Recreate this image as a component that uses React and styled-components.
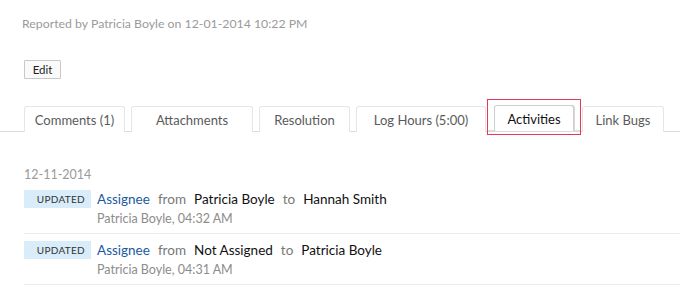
import React from 'react';
import styled, { createGlobalStyle } from 'styled-components';

const GlobalStyle = createGlobalStyle`
  body {
    margin: 0;
    background: #fff;
    font-family: "Lato", "Open Sans", sans-serif;
  }
`;

const Page = styled.div`
  width: 680px;
  height: 308px;
  overflow: hidden;
`;

const Reported = styled.div`
  padding: 16px 0 0 22px;
  font-size: 12.3px;
  line-height: 16px;
  color: #9a9a9a;
`;

const EditButton = styled.button`
  display: block;
  margin: 28px 0 0 24px;
  height: 19px;
  width: 37px;
  padding: 0;
  font-family: inherit;
  font-size: 11.5px;
  color: #222;
  background: #fafafa;
  border: 1px solid #c8c8c8;
  border-radius: 1px;
`;

const TabBar = styled.div`
  display: flex;
  align-items: flex-end;
  margin-top: 20px;
  padding-left: 24px;
  height: 32px;
  border-bottom: 1px solid #dcdcdc;
`;

const Tab = styled.div`
  box-sizing: border-box;
  width: ${({ w }) => w}px;
  height: 26px;
  margin-right: 6px;
  margin-bottom: -1px;
  display: flex;
  align-items: center;
  justify-content: center;
  font-size: 13px;
  color: ${({ active }) => (active ? '#111' : '#5a5a5a')};
  background: #fff;
  border: 1px solid ${({ active }) => (active ? '#cfcfcf' : '#e6e6e6')};
  border-bottom: none;
  border-radius: 3px 3px 0 0;
  box-shadow: ${({ active }) => (active ? '1px 0 0 #d8d8d8' : 'none')};
`;

const Highlight = styled.div`
  box-sizing: border-box;
  display: flex;
  align-items: flex-end;
  height: 36px;
  margin: 0 1px -4px -5px;
  padding: 0 6px 3px 6px;
  border: 1.5px solid #e8385a;
  background: linear-gradient(to bottom, transparent 30px, #dcdcdc 30px, #dcdcdc 31px, transparent 31px);

  & > ${Tab} {
    margin: 0;
  }
`;

const Feed = styled.div`
  padding: 35px 0 0 24px;
`;

const DateLabel = styled.div`
  font-size: 12.5px;
  line-height: 16px;
  color: #9a9a9a;
`;

const Entry = styled.div`
  display: flex;
  align-items: flex-start;
  gap: 6px;
  padding: 7px 0 6px;
  border-bottom: 1px solid #ececec;
`;

const Badge = styled.span`
  box-sizing: border-box;
  width: 67px;
  height: 18px;
  flex: none;
  display: flex;
  align-items: center;
  justify-content: flex-end;
  padding-right: 6px;
  background: #d8ecf9;
  font-size: 10px;
  letter-spacing: 0.3px;
  color: #333;
`;

const Body = styled.div`
  display: flex;
  flex-direction: column;
`;

const Line = styled.div`
  display: flex;
  gap: 8px;
  font-size: 13.5px;
  line-height: 18px;
`;

const Field = styled.span`
  color: #1b5aa0;
`;

const Word = styled.span`
  color: ${({ muted }) => (muted ? '#777' : '#111')};
`;

const Meta = styled.div`
  margin-top: 3px;
  font-size: 12.5px;
  line-height: 16px;
  color: #8c8c8c;
`;

const tabs = [
  { label: 'Comments (1)', w: 101 },
  { label: 'Attachments', w: 122 },
  { label: 'Resolution', w: 91 },
  { label: 'Log Hours (5:00)', w: 130 },
  { label: 'Activities', w: 80, active: true },
  { label: 'Link Bugs', w: 82 },
];

const entries = [
  { from: 'Patricia Boyle', to: 'Hannah Smith', by: 'Patricia Boyle, 04:32 AM' },
  { from: 'Not Assigned', to: 'Patricia Boyle', by: 'Patricia Boyle, 04:31 AM' },
];

const App = () => (
  <Page>
    <GlobalStyle />
    <Reported>Reported by Patricia Boyle on 12-01-2014 10:22 PM</Reported>
    <EditButton>Edit</EditButton>
    <TabBar>
      {tabs.map((t) =>
        t.active ? (
          <Highlight key={t.label}>
            <Tab w={t.w} active>
              {t.label}
            </Tab>
          </Highlight>
        ) : (
          <Tab key={t.label} w={t.w}>
            {t.label}
          </Tab>
        )
      )}
    </TabBar>
    <Feed>
      <DateLabel>12-11-2014</DateLabel>
      {entries.map((e, i) => (
        <Entry key={i}>
          <Badge>UPDATED</Badge>
          <Body>
            <Line>
              <Field>Assignee</Field>
              <Word muted>from</Word>
              <Word>{e.from}</Word>
              <Word muted>to</Word>
              <Word>{e.to}</Word>
            </Line>
            <Meta>{e.by}</Meta>
          </Body>
        </Entry>
      ))}
    </Feed>
  </Page>
);

export default App;
